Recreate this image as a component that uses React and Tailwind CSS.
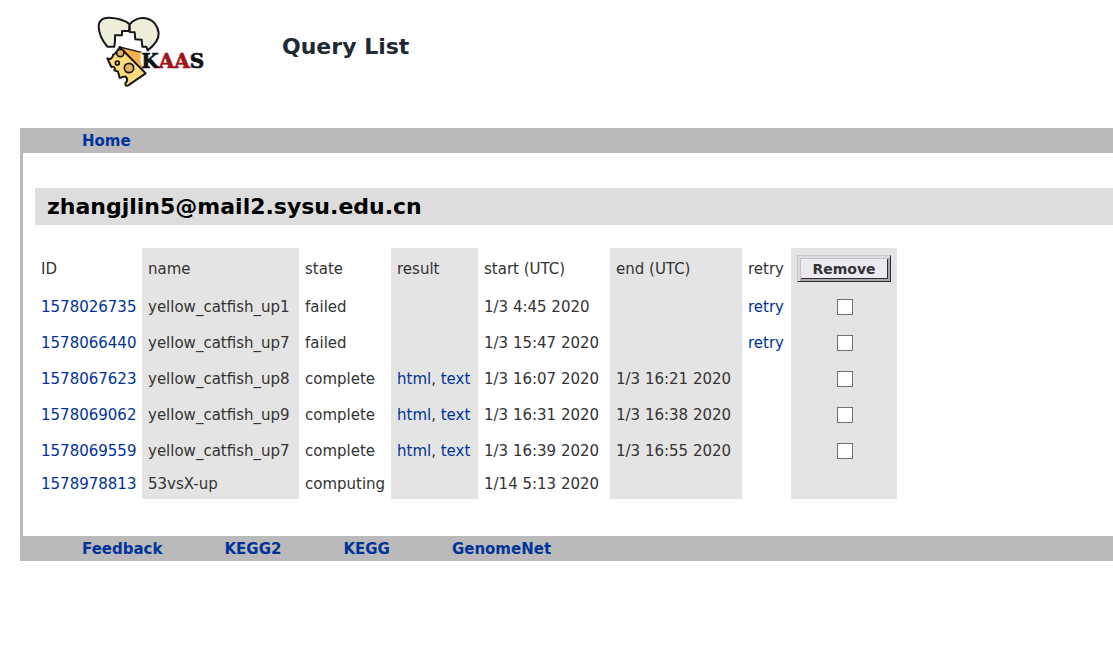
const jobs = [
  { id: "1578026735", name: "yellow_catfish_up1", state: "failed", start: "1/3 4:45 2020", end: "", retry: true },
  { id: "1578066440", name: "yellow_catfish_up7", state: "failed", start: "1/3 15:47 2020", end: "", retry: true },
  { id: "1578067623", name: "yellow_catfish_up8", state: "complete", start: "1/3 16:07 2020", end: "1/3 16:21 2020" },
  { id: "1578069062", name: "yellow_catfish_up9", state: "complete", start: "1/3 16:31 2020", end: "1/3 16:38 2020" },
  { id: "1578069559", name: "yellow_catfish_up7", state: "complete", start: "1/3 16:39 2020", end: "1/3 16:55 2020" },
  { id: "1578978813", name: "53vsX-up", state: "computing", start: "1/14 5:13 2020", end: "" },
];

function Logo() {
  return (
    <svg viewBox="0 0 375 255" className="h-[85px] w-[125px]" role="img" aria-label="KAAS">
      <g strokeWidth="6" strokeLinejoin="round" strokeLinecap="round" stroke="#15181a">
        <path fill="#eeeedb" d="M52 116 C36 97 26 75 26 54 C27 36 40 28 57 29 C82 30 107 38 119 49 L117 69 L96 69 L96 82 L75 82 L75 98 L73 116 Z" />
        <path fill="#eeeedb" d="M119 49 C132 35 151 28 167 31 C190 35 204 54 206 75 C207 93 193 112 173 127 L169 116 L157 116 L155 95 L136 94 L134 73 L119 72 Z" />
        <path stroke="none" fill="#fbb04e" d="M89 117 L154 133 L152 160 L167 194 Z" />
        <path fill="none" strokeWidth="4" d="M89 117 L154 133" />
        <path fill="#fddb7d" d="M89 117 L167 196 L118 230 C111 237 104 232 106 225 C116 219 111 204 101 206 C92 207 91 213 89 209 L84 191 L73 187 C78 179 70 174 64 177 L52 151 C60 157 69 149 69 141 C77 137 82 128 89 117 Z" />
        <circle cx="91" cy="135" r="11" fill="#e8b35e" strokeWidth="5" />
        <circle cx="82" cy="165" r="6" fill="#e8b35e" strokeWidth="5" />
        <circle cx="117" cy="180" r="14" fill="#e8b35e" strokeWidth="5" />
      </g>
      <path fill="#ffffff" d="M152 133 H205 V184 H163 L152 165 Z" />
      <g fontFamily="'DejaVu Serif', serif" fontWeight="700" fontSize="60" strokeWidth="2">
        <text x="154" y="181" fill="#111111" stroke="#111111">
          K<tspan fill="#a01418" stroke="#a01418">AA</tspan>S
        </text>
      </g>
    </svg>
  );
}

const link = "text-[#003399] hover:underline";
const bar = "flex h-[25px] items-center bg-[#bababa] pl-[59px] font-bold";

export default function App() {
  return (
    <div className="pt-2 pl-5 font-['DejaVu_Sans',Verdana,sans-serif] text-[15px] leading-[18px] text-[#333333]">
      <header className="flex h-[120px] items-start gap-[67px] pl-[70px]">
        <a href="#kaas"><Logo /></a>
        <h1 className="pt-6 text-[22px] leading-[30px] font-bold text-[#1f2a33]">Query List</h1>
      </header>

      <div className="border-l-[3px] border-[#bababa]">
        <nav className={bar}>
          <a href="#home" className={link}>Home</a>
        </nav>

        <main className="pt-[35px] pb-[37px] pl-3">
          <h2 className="bg-[#dddddd] pl-3 text-[22px] leading-[37px] font-bold text-black">
            zhangjlin5@mail2.sysu.edu.cn
          </h2>

          <table className="mt-[23px] w-[862px] table-fixed text-left whitespace-nowrap">
            <colgroup>
              <col className="w-[107px]" />
              <col className="w-[157px] bg-[#e4e4e4]" />
              <col className="w-[92px]" />
              <col className="w-[87px] bg-[#e4e4e4]" />
              <col className="w-[132px]" />
              <col className="w-[132px] bg-[#e4e4e4]" />
              <col className="w-[49px]" />
              <col className="w-[106px] bg-[#e4e4e4]" />
            </colgroup>
            <thead>
              <tr className="h-[41px]">
                {["ID", "name", "state", "result", "start (UTC)", "end (UTC)", "retry"].map((label) => (
                  <th key={label} scope="col" className="px-1.5 font-normal">{label}</th>
                ))}
                <th scope="col" className="px-1.5">
                  <button
                    type="button"
                    className="block h-[27px] w-[94px] border border-t-[#c8c6cc] border-r-[#2f2e35] border-b-[#2f2e35] border-l-[#c8c6cc] bg-[#ece9f1] text-center text-[14px] leading-[20px] font-bold shadow-[inset_2px_2px_0_#dedce2,inset_-2px_-2px_0_#a9a6ae,inset_3px_3px_0_#c4c2c8,inset_-3px_-3px_0_#2f2e35]"
                  >
                    Remove
                  </button>
                </th>
              </tr>
            </thead>
            <tbody>
              {jobs.map((job) => (
                <tr key={job.id} className="h-9 last:h-[30px]">
                  <td className="px-1.5"><a href={"#" + job.id} className={link}>{job.id}</a></td>
                  <td className="px-1.5">{job.name}</td>
                  <td className="px-1.5">{job.state}</td>
                  <td className="px-1.5">
                    {job.state === "complete" && (
                      <>
                        <a href="#html" className={link}>html</a>, <a href="#text" className={link}>text</a>
                      </>
                    )}
                  </td>
                  <td className="px-1.5">{job.start}</td>
                  <td className="px-1.5">{job.end}</td>
                  <td className="px-1.5">{job.retry && <a href="#retry" className={link}>retry</a>}</td>
                  <td className="pr-1 pl-1.5">
                    {job.state !== "computing" && (
                      <input
                        type="checkbox"
                        aria-label={"Remove " + job.id}
                        className="mx-auto block size-4 appearance-none border border-[#707070] bg-white checked:bg-[#003399]"
                      />
                    )}
                  </td>
                </tr>
              ))}
            </tbody>
          </table>
        </main>

        <footer className={bar}>
          <nav className="flex gap-[62px]">
            {["Feedback", "KEGG2", "KEGG", "GenomeNet"].map((label) => (
              <a key={label} href={"#" + label.toLowerCase()} className={link}>{label}</a>
            ))}
          </nav>
        </footer>
      </div>
    </div>
  );
}
